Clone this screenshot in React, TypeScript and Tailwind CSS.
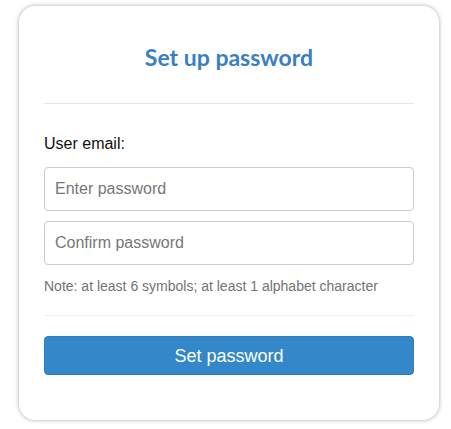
import React from "react";

export default function App() {
  return (
    <div className="w-[451px] h-[429px] bg-white pt-[6px] pl-[19px]" style={{ fontFamily: '"Liberation Sans", Arial, sans-serif' }}>
      <div className="w-[420px] h-[414px] rounded-[16px] bg-white shadow-[0_0_4px_rgba(0,0,0,0.35)] px-[25px] pt-[38px] flex flex-col">
        <h1
          className="text-center text-[23px] leading-[26px] font-bold text-[#3a80c1]"
          style={{ fontFamily: 'Lato, "Noto Sans", sans-serif' }}
        >
          Set up password
        </h1>
        <div className="mt-[33px] border-t border-[#e6e6e6]" />
        <label className="mt-[30px] text-[16px] leading-[20px] text-[#111]">User email:</label>
        <input
          type="password"
          placeholder="Enter password"
          className="mt-[13px] h-[44px] w-full rounded-[4px] border border-[#cccccc] px-[10px] text-[16px] text-[#333] placeholder:text-[#777] outline-none"
        />
        <input
          type="password"
          placeholder="Confirm password"
          className="mt-[10px] h-[44px] w-full rounded-[4px] border border-[#cccccc] px-[10px] text-[16px] text-[#333] placeholder:text-[#777] outline-none"
        />
        <p className="mt-[11px] text-[14px] leading-[20px] text-[#737373]">
          Note: at least 6 symbols; at least 1 alphabet character
        </p>
        <div className="mt-[19px] border-t border-[#eeeeee]" />
        <button className="mt-[20px] h-[39px] w-full rounded-[4px] bg-[#3487c8] border border-[#2f7dbb] text-white text-[18px] leading-[20px]">
          Set password
        </button>
      </div>
    </div>
  );
}
